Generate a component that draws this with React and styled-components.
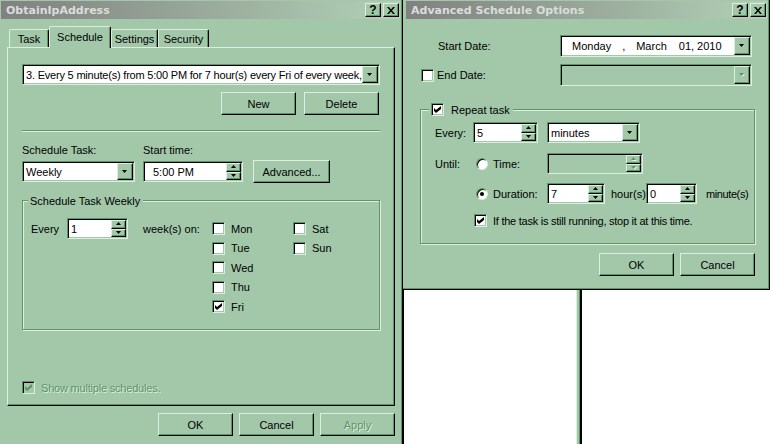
import React from 'react'
import styled, { createGlobalStyle, css } from 'styled-components'

const FACE = '#a2c8a9'
const HI = '#dcefdf'
const SHADOW = '#5e9467'
const DARK = '#000'

const GlobalStyle = createGlobalStyle`
  html, body {
    margin: 0;
    padding: 0;
  }
  body {
    font-family: "Liberation Sans", Arial, sans-serif;
    font-size: 11px;
    color: #000;
    background: ${FACE};
    overflow: hidden;
  }
`

const raised = css`
  border: 1px solid;
  border-color: ${HI} ${DARK} ${DARK} ${HI};
  box-shadow: inset -1px -1px ${SHADOW};
`

const sunken = css`
  border: 1px solid;
  border-color: ${SHADOW} ${HI} ${HI} ${SHADOW};
  box-shadow: inset 1px 1px ${DARK}, inset -1px -1px ${FACE};
`

const Glyph = styled.svg`
  display: block;
  flex-shrink: 0;
`

const Arrow = ({ up, disabled }) => (
  <Glyph width="6" height="4" viewBox="0 0 6 4">
    {disabled && <path d={up ? 'M3.5 1L6 4H1z' : 'M1 1h5L3.5 4z'} fill={HI} />}
    <path d={up ? 'M2.5 0L5 3H0z' : 'M0 0h5L2.5 3z'} fill={disabled ? SHADOW : '#000'} />
  </Glyph>
)

const CheckMark = ({ color = '#000' }) => (
  <Glyph width="7" height="7" viewBox="0 0 7 7">
    <path d="M0 2l2 2 5-4v3l-5 4-2-2z" fill={color} />
  </Glyph>
)

const CloseMark = () => (
  <Glyph width="8" height="7" viewBox="0 0 8 7">
    <path d="M0 0h2l2 2.4L6 0h2L5 3.5 8 7H6L4 4.6 2 7H0l3-3.5z" fill="#000" />
  </Glyph>
)

/* ---------- window chrome ---------- */

const Screen = styled.div`
  display: flex;
  width: 770px;
  height: 444px;
  overflow: hidden;
  background: ${FACE};
`

const Window = styled.div`
  flex-shrink: 0;
  display: flex;
  flex-direction: column;
  box-sizing: border-box;
  width: ${p => p.$w}px;
  height: ${p => p.$h}px;
  padding: 1px 2px 0 ${p => p.$pl}px;
  background: ${FACE};
  border-right: 1px solid ${DARK};
  border-bottom: 1px solid ${DARK};
  box-shadow: inset -1px -1px ${SHADOW};
`

const TitleBar = styled.div`
  display: flex;
  align-items: center;
  height: 18px;
  padding: 0 1px 0 5px;
  background: linear-gradient(to right, #808080, #b2d1b7);
  color: #d9ddd9;
  font-family: "DejaVu Sans", Verdana, sans-serif;
  font-weight: bold;
  font-size: 11px;
`

const TitleText = styled.div`
  flex: 1;
  white-space: nowrap;
`

const CapButton = styled.div`
  ${raised}
  box-sizing: border-box;
  width: 16px;
  height: 14px;
  margin-left: ${p => p.$ml || 0}px;
  display: flex;
  align-items: center;
  justify-content: center;
  background: ${FACE};
  color: #000;
  font-family: "Liberation Sans", Arial, sans-serif;
  font-weight: bold;
  font-size: 12px;
`

/* ---------- controls ---------- */

const Button = styled.div`
  ${raised}
  box-sizing: border-box;
  flex-shrink: 0;
  width: ${p => p.$w || 75}px;
  height: 23px;
  margin-left: ${p => p.$ml || 0}px;
  display: flex;
  align-items: center;
  justify-content: center;
  background: ${FACE};
  color: ${p => (p.$disabled ? SHADOW : '#000')};
  text-shadow: ${p => (p.$disabled ? `1px 1px 0 ${HI}` : 'none')};
`

const Field = styled.div`
  ${sunken}
  box-sizing: border-box;
  flex-shrink: 0;
  display: flex;
  align-items: stretch;
  width: ${p => p.$w}px;
  height: ${p => p.$h || 21}px;
  margin-left: ${p => p.$ml || 0}px;
  padding: 1px;
  background: ${p => (p.$disabled ? FACE : '#fff')};
`

const FieldText = styled.div`
  flex: 1;
  display: flex;
  align-items: center;
  padding-left: ${p => (p.$pad === undefined ? 2 : p.$pad)}px;
  letter-spacing: ${p => (p.$tight ? '-0.2px' : 'normal')};
  white-space: pre;
  overflow: hidden;
`

const DropButton = styled.div`
  ${raised}
  box-sizing: border-box;
  width: 16px;
  display: flex;
  align-items: center;
  justify-content: center;
  background: ${FACE};
`

const SpinButtons = styled.div`
  display: flex;
  flex-direction: column;
  width: 15px;
`

const SpinButton = styled.div`
  ${raised}
  box-sizing: border-box;
  flex: 1;
  display: flex;
  align-items: center;
  justify-content: center;
  background: ${FACE};
`

const Combo = ({ w, h, ml, text, pad, tight, disabled }) => (
  <Field $w={w} $h={h} $ml={ml} $disabled={disabled}>
    <FieldText $pad={pad} $tight={tight}>{text}</FieldText>
    <DropButton>
      <Arrow disabled={disabled} />
    </DropButton>
  </Field>
)

const Spin = ({ w, ml, text, pad, disabled }) => (
  <Field $w={w} $ml={ml} $disabled={disabled}>
    <FieldText $pad={pad}>{text}</FieldText>
    <SpinButtons>
      <SpinButton>
        <Arrow up disabled={disabled} />
      </SpinButton>
      <SpinButton>
        <Arrow disabled={disabled} />
      </SpinButton>
    </SpinButtons>
  </Field>
)

const CheckBox = styled.div`
  box-sizing: border-box;
  flex-shrink: 0;
  width: 13px;
  height: 13px;
  border: 1px solid;
  border-color: ${SHADOW} ${HI} ${HI} ${SHADOW};
  box-shadow: inset 1px 1px ${DARK}, inset -1px -1px ${FACE};
  background: ${p => (p.$disabled ? FACE : '#fff')};
  display: flex;
  align-items: center;
  justify-content: center;
`

const Radio = styled.div`
  box-sizing: border-box;
  flex-shrink: 0;
  width: 12px;
  height: 12px;
  border-radius: 50%;
  border: 1px solid;
  border-color: ${SHADOW} ${HI} ${HI} ${SHADOW};
  box-shadow: inset 1px 1px ${DARK};
  background: #fff;
  display: flex;
  align-items: center;
  justify-content: center;

  &::after {
    content: '';
    display: ${p => (p.$on ? 'block' : 'none')};
    width: 4px;
    height: 4px;
    border-radius: 50%;
    background: #000;
  }
`

const Group = styled.div`
  position: relative;
  box-sizing: border-box;
  flex-shrink: 0;
  width: ${p => p.$w}px;
  height: ${p => p.$h}px;
  margin: ${p => p.$mt}px 0 0 ${p => p.$ml || 0}px;
  padding: ${p => p.$pad};
  border: 1px solid ${SHADOW};
  box-shadow: inset 1px 1px ${HI}, 1px 1px 0 ${HI};
`

const Legend = styled.div`
  position: absolute;
  top: ${p => p.$top}px;
  left: ${p => p.$left}px;
  display: flex;
  align-items: center;
  gap: 7px;
  height: 13px;
  padding: 0 3px 0 2px;
  background: ${FACE};
  white-space: nowrap;
`

/* ---------- left dialog ---------- */

const TabStrip = styled.div`
  display: flex;
  align-items: flex-end;
  height: 21px;
  margin: 7px 0 0 8px;
`

const Tab = styled.div`
  position: relative;
  z-index: ${p => (p.$active ? 2 : 1)};
  box-sizing: border-box;
  width: ${p => p.$w}px;
  height: ${p => (p.$active ? 22 : 18)}px;
  margin-bottom: ${p => (p.$active ? -1 : 0)}px;
  padding-bottom: ${p => (p.$active ? 2 : 0)}px;
  border: 1px solid ${HI};
  border-right-color: ${DARK};
  border-bottom: none;
  border-radius: 2px 2px 0 0;
  box-shadow: inset -1px 0 ${SHADOW};
  background: ${FACE};
  display: flex;
  align-items: center;
  justify-content: center;
`

const Panel = styled.div`
  box-sizing: border-box;
  display: flex;
  flex-direction: column;
  width: 388px;
  height: 359px;
  margin-left: 6px;
  padding: 16px 0 0 14px;
  border: 1px solid;
  border-color: ${HI} ${DARK} ${DARK} ${HI};
  box-shadow: inset -1px -1px ${SHADOW};
`

const ButtonRow = styled.div`
  display: flex;
  justify-content: flex-end;
  gap: ${p => p.$gap}px;
  width: ${p => p.$w}px;
  margin: ${p => p.$mt}px 0 0 ${p => p.$ml || 0}px;
`

const Separator = styled.div`
  width: 358px;
  margin-top: 15px;
  border-top: 1px solid ${SHADOW};
  border-bottom: 1px solid ${HI};
`

const LabelRow = styled.div`
  display: flex;
  margin-top: 12px;
  line-height: 13px;
`

const FieldLabel = styled.div`
  width: ${p => (p.$w ? `${p.$w}px` : 'auto')};
  white-space: nowrap;
`

const ControlRow = styled.div`
  display: flex;
  align-items: center;
  height: 23px;
  margin-top: 3px;
`

const WeekRow = styled.div`
  display: flex;
  align-items: flex-start;
`

const InlineLabel = styled.div`
  flex-shrink: 0;
  display: flex;
  align-items: center;
  width: ${p => (p.$w ? `${p.$w}px` : 'auto')};
  height: ${p => p.$h || 21}px;
  margin-left: ${p => p.$ml || 0}px;
  white-space: nowrap;
  letter-spacing: ${p => (p.$tight ? `-${p.$tight}px` : 'normal')};
  color: ${p => (p.$disabled ? SHADOW : '#000')};
  text-shadow: ${p => (p.$disabled ? `1px 1px 0 ${HI}` : 'none')};
`

const Days = styled.div`
  display: grid;
  grid-template-columns: 81px auto;
  grid-template-rows: repeat(5, 19.5px);
  grid-auto-flow: column;
  margin-top: 1px;
`

const CheckItem = styled.div`
  display: flex;
  align-items: center;
  gap: ${p => p.$gap || 6}px;
  margin: ${p => p.$mt || 0}px 0 0 ${p => p.$ml || 0}px;
  white-space: nowrap;
`

/* ---------- right dialog ---------- */

const RightSide = styled.div`
  display: flex;
  flex-direction: column;
  flex: 1;
  min-width: 0;
`

const DateGrid = styled.div`
  display: grid;
  grid-template-columns: 154px 192px;
  grid-template-rows: 22px 22px;
  row-gap: 7px;
  align-items: center;
  margin-top: 16px;
`

const DateLabel = styled.div`
  display: flex;
  align-items: center;
  gap: 3px;
  padding-left: ${p => p.$pl}px;
`

const DatePart = styled.span`
  margin-left: ${p => p.$ml}px;
`

const GroupRow = styled.div`
  display: flex;
  align-items: center;
  height: ${p => p.$h || 21}px;
  margin-top: ${p => p.$mt || 0}px;
  padding-left: ${p => p.$pl || 0}px;
`

const Panes = styled.div`
  display: flex;
  flex: 1;
`

const Pane = styled.div`
  box-sizing: border-box;
  flex: ${p => (p.$w ? `0 0 ${p.$w}px` : '1')};
  background: #fff;
  border-left: ${p => (p.$edge ? `1px solid ${DARK}` : 'none')};
`

const Splitter = styled.div`
  box-sizing: border-box;
  flex: 0 0 6px;
  background: ${FACE};
  border-left: 1px solid ${HI};
  border-right: 2px solid ${DARK};
  box-shadow: inset -1px 0 ${SHADOW};
`

const Caption = ({ title }) => (
  <TitleBar>
    <TitleText>{title}</TitleText>
    <CapButton>?</CapButton>
    <CapButton $ml={2}>
      <CloseMark />
    </CapButton>
  </TitleBar>
)

const days = [
  ['Mon', false],
  ['Tue', false],
  ['Wed', false],
  ['Thu', false],
  ['Fri', true],
  ['Sat', false],
  ['Sun', false],
]

const App = () => {
  return (
    <Screen>
      <GlobalStyle />

      <Window $w={403} $h={446} $pl={1}>
        <Caption title="ObtainIpAddress" />
        <TabStrip>
          <Tab $w={40}>Task</Tab>
          <Tab $w={62} $active>Schedule</Tab>
          <Tab $w={47}>Settings</Tab>
          <Tab $w={51}>Security</Tab>
        </TabStrip>
        <Panel>
          <Combo
            w={358}
            tight
            text="3. Every 5 minute(s) from 5:00 PM for 7 hour(s) every Fri of every week,"
          />
          <ButtonRow $gap={8} $w={357} $mt={7}>
            <Button>New</Button>
            <Button>Delete</Button>
          </ButtonRow>
          <Separator />
          <LabelRow>
            <FieldLabel $w={121}>Schedule Task:</FieldLabel>
            <FieldLabel>Start time:</FieldLabel>
          </LabelRow>
          <ControlRow>
            <Combo w={113} text="Weekly" />
            <Spin w={100} ml={8} pad={8} text="5:00 PM" />
            <Button $w={77} $ml={10}>Advanced...</Button>
          </ControlRow>
          <Group $w={358} $h={130} $mt={17} $pad="17px 0 0 8px">
            <Legend $top={-7} $left={5}>Schedule Task Weekly</Legend>
            <WeekRow>
              <InlineLabel $w={36}>Every</InlineLabel>
              <Spin w={61} text="1" />
              <InlineLabel $w={69} $ml={15}>week(s) on:</InlineLabel>
              <Days>
                {days.map(([d, on]) => (
                  <CheckItem key={d}>
                    <CheckBox>{on && <CheckMark />}</CheckBox>
                    {d}
                  </CheckItem>
                ))}
              </Days>
            </WeekRow>
          </Group>
          <CheckItem $mt={51}>
            <CheckBox $disabled>
              <CheckMark color={SHADOW} />
            </CheckBox>
            <InlineLabel $h={13} $tight={0.2} $disabled>Show multiple schedules.</InlineLabel>
          </CheckItem>
        </Panel>
        <ButtonRow $gap={6} $w={388} $mt={7} $ml={6}>
          <Button>OK</Button>
          <Button>Cancel</Button>
          <Button $disabled>Apply</Button>
        </ButtonRow>
      </Window>

      <RightSide>
        <Window $w={367} $h={290} $pl={3}>
          <Caption title="Advanced Schedule Options" />
          <DateGrid>
            <DateLabel $pl={32}>Start Date:</DateLabel>
            <Field $w={192} $h={22}>
              <FieldText $pad={10}>
                Monday
                <DatePart $ml={11}>,</DatePart>
                <DatePart $ml={11}>March</DatePart>
                <DatePart $ml={12}>01, 2010</DatePart>
              </FieldText>
              <DropButton>
                <Arrow />
              </DropButton>
            </Field>
            <DateLabel $pl={15}>
              <CheckBox />
              End Date:
            </DateLabel>
            <Combo w={192} h={22} text="" disabled />
          </DateGrid>

          <Group $w={335} $h={135} $mt={23} $ml={14} $pad="12px 0 0 14px">
            <Legend $top={-7} $left={8}>
              <CheckBox>
                <CheckMark />
              </CheckBox>
              Repeat task
            </Legend>
            <GroupRow>
              <InlineLabel $w={38}>Every:</InlineLabel>
              <Spin w={65} text="5" />
              <Combo w={93} ml={9} text="minutes" />
            </GroupRow>
            <GroupRow $mt={10}>
              <InlineLabel $w={41}>Until:</InlineLabel>
              <Radio />
              <InlineLabel $w={54} $ml={5}>Time:</InlineLabel>
              <Spin w={96} text="" disabled />
            </GroupRow>
            <GroupRow $mt={9} $pl={41}>
              <Radio $on />
              <InlineLabel $w={54} $ml={5}>Duration:</InlineLabel>
              <Spin w={58} text="7" />
              <InlineLabel $w={35} $ml={6}>hour(s)</InlineLabel>
              <Spin w={51} text="0" />
              <InlineLabel $ml={9} $tight={0.4}>minute(s)</InlineLabel>
            </GroupRow>
            <GroupRow $h={13} $mt={10} $pl={39}>
              <CheckBox>
                <CheckMark />
              </CheckBox>
              <InlineLabel $h={13} $ml={6} $tight={0.25}>
                If the task is still running, stop it at this time.
              </InlineLabel>
            </GroupRow>
          </Group>

          <ButtonRow $gap={6} $w={335} $mt={9} $ml={14}>
            <Button>OK</Button>
            <Button>Cancel</Button>
          </ButtonRow>
        </Window>

        <Panes>
          <Pane $w={173} $edge />
          <Splitter />
          <Pane />
        </Panes>
      </RightSide>
    </Screen>
  )
}

export default App
